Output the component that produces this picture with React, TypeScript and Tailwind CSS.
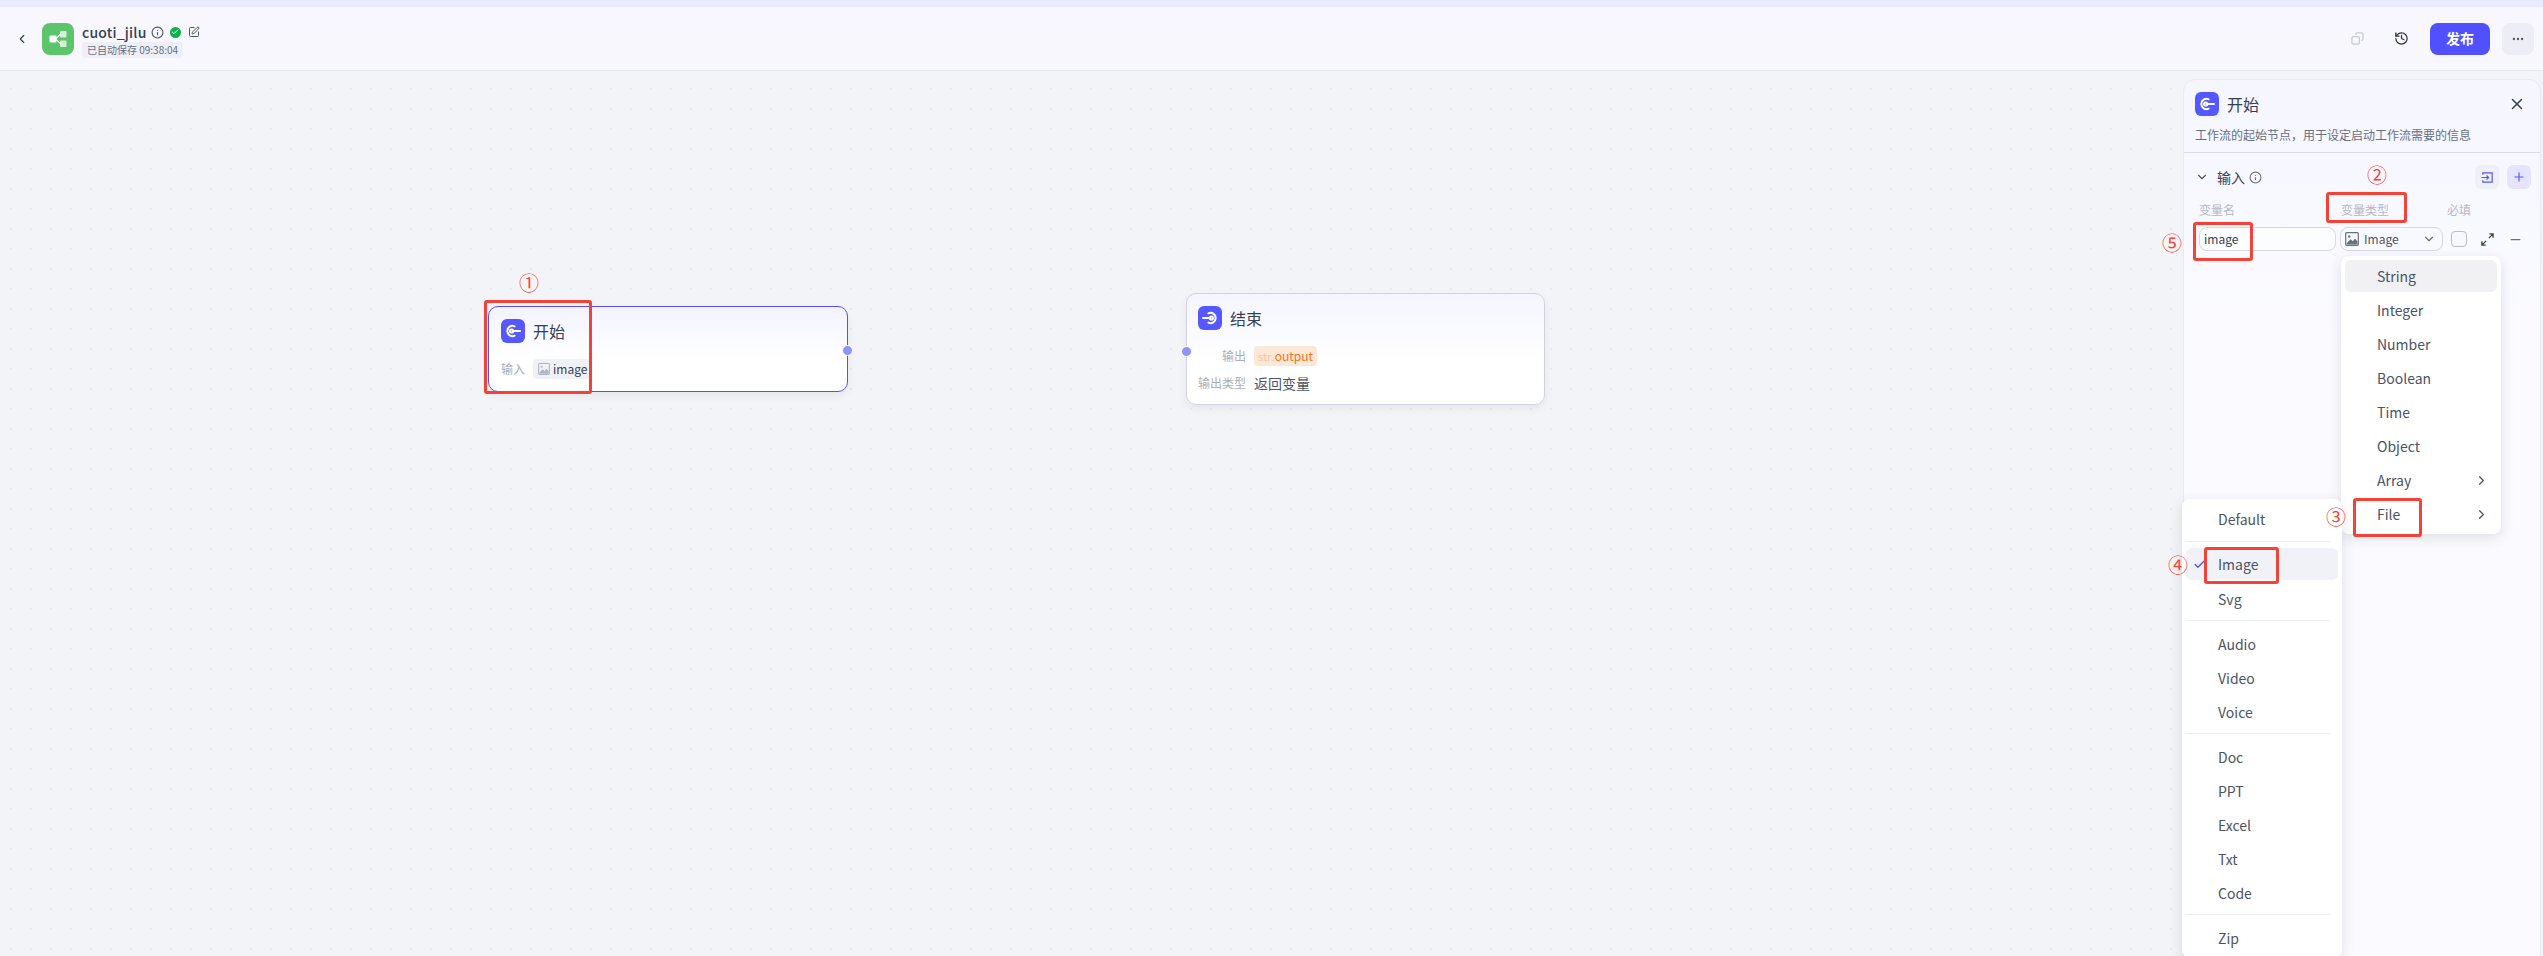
import React from "react";
import { ChevronLeft, ChevronDown, ChevronRight, Info, SquarePen, History, X, Plus, Minus, Check, Ellipsis } from "lucide-react";

const StartIcon = () => (
  <div className="w-6 h-6 rounded-md bg-[#5558ff] flex items-center justify-center shrink-0">
    <svg width="18" height="18" viewBox="0 0 18 18" fill="none" stroke="white" strokeWidth="2" strokeLinecap="round">
      <path d="M10.6 4.4A5.1 5.1 0 1 0 10.6 13.6" />
      <circle cx="7.6" cy="9" r="1.6" />
      <path d="M10.5 9H16" />
    </svg>
  </div>
);
const EndIcon = () => (
  <div className="w-6 h-6 rounded-md bg-[#5558ff] flex items-center justify-center shrink-0">
    <svg width="18" height="18" viewBox="0 0 18 18" fill="none" stroke="white" strokeWidth="2" strokeLinecap="round">
      <path d="M7.4 4.4A5.1 5.1 0 1 1 7.4 13.6" />
      <circle cx="10.4" cy="9" r="1.6" />
      <path d="M7.5 9H2" />
    </svg>
  </div>
);
const ImgIcon = ({ c = "#676f83", s = 14 }: { c?: string; s?: number }) => (
  <svg width={s} height={s} viewBox="0 0 14 14" fill="none">
    <rect x="0.7" y="0.7" width="12.6" height="12.6" rx="1" stroke={c} strokeWidth="1.2" />
    <circle cx="4.2" cy="4.4" r="1.2" fill={c} />
    <path d="M1.5 11.5 5.5 7.2 7.8 9.2 10 6.6 12.5 9.5V12.5H1.5Z" fill={c} />
  </svg>
);
const Handle = ({ className }: { className: string }) => (
  <div className={"absolute w-[9px] h-[9px] rounded-full bg-[#9195f2] border border-white box-content " + className} />
);
const Mark = ({ className }: { className: string }) => (
  <div className={"absolute border-[3px] border-[#f44336] rounded-[3px] " + className} />
);
const Num = ({ className, children }: { className: string; children: React.ReactNode }) => (
  <div className={"absolute w-5 h-5 flex items-center justify-center text-[20px] leading-5 text-[#f44336] " + className}>{children}</div>
);
const Item = ({ children, active, arrow, className = "" }: { children: React.ReactNode; active?: string; arrow?: boolean; className?: string }) => (
  <div className={"h-8 rounded-md flex items-center pl-8 pr-2 text-sm text-[#495464] relative " + (active || "") + " " + className}>
    <span className="flex-1">{children}</span>
    {arrow && <ChevronRight size={15} className="text-[#495464]" />}
  </div>
);

export default function App() {
  return (
    <div className="relative w-[2543px] h-[956px] overflow-hidden flex flex-col bg-[#f2f4f7] text-[#354052] font-['Noto_Sans_CJK_SC','Noto_Sans',sans-serif]">
      <div className="h-[7px] bg-[#e9ebfc] shrink-0" />
      <header className="h-[64px] shrink-0 bg-[#f7f7fd] border-b border-[#e3e4ee] flex items-center pl-[15px] pr-[9px]">
        <ChevronLeft size={14} className="text-[#354052] mr-[13px]" />
        <div className="w-8 h-8 rounded-lg bg-[#5cc46a] flex items-center justify-center mr-2">
          <svg width="20" height="20" viewBox="0 0 20 20" fill="white">
            <rect x="1.5" y="6.5" width="7" height="7" rx="1" />
            <rect x="12" y="2" width="6.5" height="6.5" rx="1" opacity="0.75" />
            <rect x="12" y="11.5" width="6.5" height="6.5" rx="1" opacity="0.75" />
            <path d="M8 9.5 13 5M8 10.5l5 4.5" stroke="white" strokeWidth="1.2" />
          </svg>
        </div>
        <div className="flex flex-col justify-center items-start mt-1">
          <div className="flex items-center h-[18px]">
            <span className="text-[14px] leading-[18px] font-medium text-[#354052] tracking-[0.2px]">cuoti_jilu</span>
            <Info size={13} className="ml-[4px] text-[#495464]" />
            <span className="ml-[6px] w-[11px] h-[11px] rounded-full bg-[#0cb04c] flex items-center justify-center">
              <Check size={8} strokeWidth={3} className="text-white" />
            </span>
            <SquarePen size={12} className="ml-[7px] text-[#495464]" />
          </div>
          <div className="mt-[1px] h-4 px-[5px] rounded bg-[#eeeff7] text-[10px] leading-4 text-[#676f83]">已自动保存 09:38:04</div>
        </div>
        <div className="ml-auto flex items-center">
          <svg width="13" height="13" viewBox="0 0 14 14" fill="none" stroke="#c5c9d3" strokeWidth="1.3" className="mr-[30px]">
            <rect x="1" y="5" width="8" height="8" rx="1.5" />
            <path d="M5 3V2.5A1.5 1.5 0 0 1 6.500 1h5A1.500 1.500 0 0 1 13 2.500v5A1.500 1.500 0 0 1 11.500 9H11" />
          </svg>
          <History size={15} className="text-[#2b3340] mr-[21px]" />
          <button className="w-[60px] h-8 rounded-lg bg-[#5050ff] text-white text-[14px] font-semibold">发布</button>
          <button className="w-8 h-8 ml-3 rounded-lg bg-[#ecedf5] flex items-center justify-center">
            <Ellipsis size={14} className="text-[#495464]" />
          </button>
        </div>
      </header>

      <main className="relative flex-1 flex justify-end pr-[2px] pt-2 bg-[radial-gradient(circle,#e9ebee_1px,transparent_1.3px)] bg-[size:20px_20px] bg-[position:1px_8px]">
        {/* Start node */}
        <div className="absolute left-[488px] top-[235px] w-[360px] h-[86px] rounded-[10px] border border-[#5550f5] bg-gradient-to-b from-[#f2f3ff] to-white to-60% shadow-[0_4px_10px_rgba(16,24,40,0.06)] pl-3 pt-3">
          <div className="flex items-center h-6 gap-2">
            <StartIcon />
            <span className="text-[16px] text-[#354052]">开始</span>
          </div>
          <div className="flex items-center mt-4 h-5">
            <span className="w-8 text-xs text-[#a8adb9]">输入</span>
            <span className="h-5 w-[57px] rounded bg-[#f0f1f7] flex items-center pl-[5px] gap-[3px] text-[12px] text-[#354052]">
              <ImgIcon c="#b0b5c4" s={12} />
              image
            </span>
          </div>
          <Handle className="-right-[6px] top-[38px]" />
        </div>

        {/* End node */}
        <div className="absolute left-[1186px] top-[222px] w-[359px] h-[112px] rounded-[10px] border border-[#d0d2e0] bg-gradient-to-b from-[#f4f5ff] to-white to-60% shadow-[0_4px_10px_rgba(16,24,40,0.06)] pl-[11px] pt-3">
          <div className="flex items-center h-6 gap-2">
            <EndIcon />
            <span className="text-[16px] text-[#354052]">结束</span>
          </div>
          <div className="flex items-center mt-[16px] h-5">
            <span className="w-[48px] text-right text-xs text-[#a8adb9]">输出</span>
            <span className="ml-2 h-5 w-[63px] rounded bg-[#fbe8d8] flex items-center pl-1 gap-[1px] text-[12px] text-[#f97316]">
              <span className="text-[11px] text-[#f9c6a0]">str.</span>output
            </span>
          </div>
          <div className="flex items-center mt-[7px] h-5">
            <span className="w-[48px] text-right text-xs text-[#a8adb9] whitespace-nowrap">输出类型</span>
            <span className="ml-2 text-[14px] text-[#495464]">返回变量</span>
          </div>
          <Handle className="-left-[6px] top-[52px]" />
        </div>

        {/* Config panel */}
        <aside className="w-[358px] h-[900px] rounded-t-xl border border-[#e8e9f2] bg-gradient-to-b from-[#f5f6ff] to-[#fbfbff] to-30% flex flex-col">
          <div className="h-[73px] shrink-0 border-b border-[#d9dbe6] pl-[11px] pr-[14px] pt-3">
            <div className="flex items-center h-6 gap-2">
              <StartIcon />
              <span className="text-[16px] text-[#354052]">开始</span>
              <X size={18} className="ml-auto text-[#354052]" />
            </div>
            <p className="mt-[10px] text-xs leading-[18px] text-[#676f83]">工作流的起始节点，用于设定启动工作流需要的信息</p>
          </div>
          <div className="pl-[15px] pr-[9px] pt-3">
            <div className="flex items-center h-6">
              <ChevronDown size={14} className="text-[#495464] mr-[8px] -ml-[4px]" />
              <span className="text-[14px] text-[#354052]">输入</span>
              <Info size={13} className="ml-[4px] text-[#676f83]" />
              <button className="ml-auto w-6 h-6 rounded-md bg-[#eeeff7] flex items-center justify-center">
                <svg width="13" height="13" viewBox="0 0 14 14" fill="none" stroke="#5558ff" strokeWidth="1.3">
                  <path d="M2 4V2h10v10H2v-2" />
                  <path d="M0.500 7H8M6 4.800 8.200 7 6 9.200" />
                </svg>
              </button>
              <button className="ml-2 w-6 h-6 rounded-md bg-[#e4e5fd] flex items-center justify-center">
                <Plus size={14} className="text-[#5558ff]" />
              </button>
            </div>
            <div className="flex items-center mt-3 h-[18px] text-xs text-[#b4b8c4] pl-0">
              <span className="w-[141px]">变量名</span>
              <span className="w-[107px] pl-[1px]">变量类型</span>
              <span>必填</span>
            </div>
            <div className="flex items-center mt-2 h-6">
              <div className="w-[137px] h-6 rounded-lg border border-[#d5d8e5] bg-white/60 flex items-center pl-[4px] text-[12px] text-[#354052]">image</div>
              <div className="ml-1 w-[103px] h-6 rounded-lg border border-[#d5d8e5] flex items-center pl-1 text-[12px] text-[#495464]">
                <ImgIcon c="#676f83" s={14} />
                <span className="ml-[5px] flex-1">Image</span>
                <ChevronDown size={14} className="text-[#676f83] mr-[6px]" />
              </div>
              <div className="ml-2 w-4 h-4 rounded border border-[#b9bdcb] bg-[#f8f8fc]" />
              <svg width="13" height="13" viewBox="0 0 14 14" fill="none" stroke="#354052" strokeWidth="1.4" className="ml-[14px]">
                <path d="M8.500 5.500 12.500 1.500M9 1h4v4M5.500 8.500l-4 4M5 13H1V9" />
              </svg>
              <Minus size={15} className="ml-[14px] text-[#676f83]" />
            </div>
          </div>
        </aside>
      </main>

      {/* Type menu */}
      <div className="absolute left-[2341px] top-[256px] w-[160px] h-[278px] rounded-lg bg-white shadow-[0_4px_14px_rgba(16,24,40,0.12)] p-1 flex flex-col gap-[2px]">
        <Item active="bg-[#f1f1f3]">String</Item>
        <Item>Integer</Item>
        <Item>Number</Item>
        <Item>Boolean</Item>
        <Item>Time</Item>
        <Item>Object</Item>
        <Item arrow>Array</Item>
        <Item arrow>File</Item>
      </div>

      {/* File sub menu */}
      <div className="absolute left-[2182px] top-[499px] w-[160px] h-[459px] rounded-lg bg-white shadow-[0_4px_14px_rgba(16,24,40,0.12)] px-1 pt-1 flex flex-col">
        <Item>Default</Item>
        <div className="h-px bg-[#eceef2] mr-2 mt-[6px] mb-[6px]" />
        <Item active="bg-[#f1f2f8]">
          <Check size={13} strokeWidth={2.5} className="absolute left-[7px] top-[10px] text-[#5050ff]" />
          Image
        </Item>
        <Item className="mt-[3px]">Svg</Item>
        <div className="h-px bg-[#eceef2] mr-2 mt-[5px] mb-[7px]" />
        <Item>Audio</Item>
        <Item className="mt-[2px]">Video</Item>
        <Item className="mt-[2px]">Voice</Item>
        <div className="h-px bg-[#eceef2] mr-2 mt-[5px] mb-[7px]" />
        <Item>Doc</Item>
        <Item className="mt-[2px]">PPT</Item>
        <Item className="mt-[2px]">Excel</Item>
        <Item className="mt-[2px]">Txt</Item>
        <Item className="mt-[2px]">Code</Item>
        <div className="h-px bg-[#eceef2] mr-2 mt-[5px] mb-[7px]" />
        <Item>Zip</Item>
      </div>

      {/* Annotations */}
      <Mark className="left-[484px] top-[300px] w-[108px] h-[94px]" />
      <Num className="left-[519px] top-[273px]">①</Num>
      <Mark className="left-[2326px] top-[192px] w-[81px] h-[31px]" />
      <Num className="left-[2367px] top-[165px]">②</Num>
      <Mark className="left-[2353px] top-[498px] w-[69px] h-[39px]" />
      <Num className="left-[2326px] top-[507px]">③</Num>
      <Mark className="left-[2204px] top-[547px] w-[75px] h-[37px]" />
      <Num className="left-[2168px] top-[555px]">④</Num>
      <Mark className="left-[2193px] top-[222px] w-[60px] h-[39px]" />
      <Num className="left-[2162px] top-[233px]">⑤</Num>
    </div>
  );
}
